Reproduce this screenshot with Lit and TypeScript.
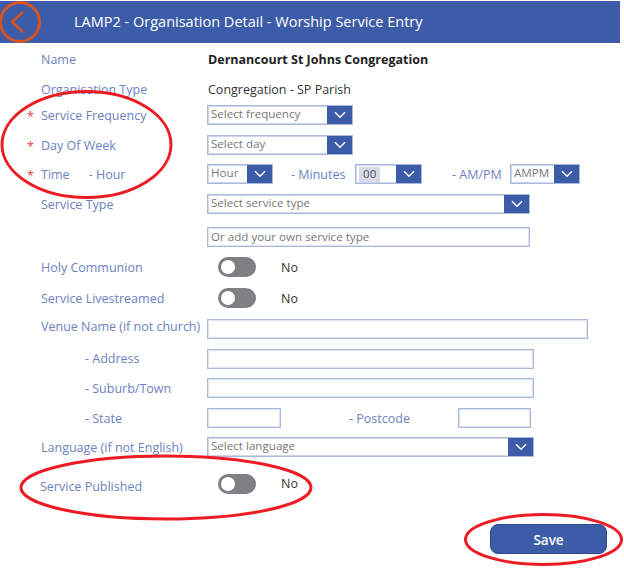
import { LitElement, html, css, svg } from "lit";
import { customElement } from "lit/decorators.js";

const chevron = html`<svg class="chev" width="12" height="8" viewBox="0 0 12 8"><path d="M1 1.2 L6 6.2 L11 1.2" fill="none" stroke="#fff" stroke-width="1.5"/></svg>`;

@customElement("app-root")
export class AppRoot extends LitElement {
  static styles = css`
    :host { display: block; width: 624px; height: 576px; position: relative; background: #fff; overflow: hidden;
      font-family: "Open Sans", "Noto Sans", sans-serif; font-size: 12.5px; color: #333; box-sizing: border-box; padding-top: 1px; }
    .head { height: 42px; width: 620px; background: #3c5ca8; display: flex; align-items: center; color: #fff; font-size: 14.5px; }
    .title { margin-left: 74px; padding-bottom: 1px; white-space: nowrap; }
    .form { display: grid; grid-template-rows: 33px 26px 26px 34px 24px 36px 29px 32px 30px 32px 27px 32px 28px 30px 44px; }
    .row { display: flex; align-items: center; min-width: 0; }
    .lab { width: 206px; box-sizing: border-box; padding-left: 41px; color: #6c81bf; white-space: nowrap; position: relative; flex: none; }
    .lab.sub { padding-left: 85px; }
    .lab.up { top: -3px; }
    .lab.pub { padding-left: 40px; top: 2px; }
    .lab.time { display: flex; gap: 19px; }
    .star { position: absolute; left: 27px; top: 1px; color: #f0414a; }
    .val { color: #333; white-space: nowrap; margin-left: 2px; }
    .val.b { font-weight: 700; color: #222; }
    .sel { box-sizing: border-box; height: 20px; border: 1px solid #a9b9de; box-shadow: inset 0 0 0 1px #cdd6eb; display: flex; align-items: stretch; color: #777; font-size: 11.6px; background: #fff; flex: none; margin-left: 1px; }
    .sel .txt { flex: 1; padding-left: 3px; line-height: 16px; white-space: nowrap; overflow: hidden; }
    .sel .btn { width: 25px; background: #3c5ca8; display: flex; align-items: center; justify-content: center; }
    .chev { display: block; }
    .inp { box-sizing: border-box; height: 20px; border: 1px solid #a9b9de; box-shadow: inset 0 0 0 1px #dde3f1; background: #fff; color: #777; font-size: 11.6px; padding-left: 3px; line-height: 17px; margin-left: 1px; flex: none; }
    .w146 { width: 146px; } .w66 { width: 66px; } .w67 { width: 67px; } .w70 { width: 70px; }
    .w322 { width: 323px; } .w381 { width: 381px; } .w327 { width: 327px; } .w74 { width: 74px; } .w73 { width: 73px; }
    .il { color: #6c81bf; white-space: nowrap; flex: none; }
    .min { margin-left: 18px; width: 64px; }
    .ampm { margin-left: 30px; width: 58px; }
    .sel.m { margin-left: 0; }
    .post { margin-left: 68px; width: 108px; }
    .hl { background: #d5dbea; color: #555; padding-left: 4px; margin: 2px 0 1px 3px; line-height: 14px; flex: none; width: 17px; }
    .gap { flex: 1; }
    .tog { margin-left: 12px; width: 38px; height: 20px; border-radius: 10px; background: #808084; position: relative; flex: none; }
    .tog::after { content: ""; position: absolute; left: 3px; top: 3px; width: 14px; height: 14px; border-radius: 50%; background: #fff; }
    .no { margin-left: 25px; color: #333; }
    .no.up { position: relative; top: -1px; }
    .save { margin: 18px 0 0 490px; width: 117px; height: 30px; box-sizing: border-box; border: 1px solid #2e4a8c; border-radius: 8px; background: #3c5ca8; color: #fff; font-weight: 600; font-size: 13.5px; line-height: 30px; text-align: center; }
    .ov { position: absolute; left: 0; top: 0; pointer-events: none; }
  `;

  sel(text: string, w: string) {
    return html`<div class="sel ${w}"><div class="txt">${text}</div><div class="btn">${chevron}</div></div>`;
  }
  toggle(label: string) {
    return html`<div class="row"><div class="lab">${label}</div><div class="tog"></div><div class="no">No</div></div>`;
  }

  render() {
    return html`
      <div class="head"><div class="title">LAMP2 - Organisation Detail - Worship Service Entry</div></div>
      <div class="form">
        <div class="row"><div class="lab">Name</div><div class="val b">Dernancourt St Johns Congregation</div></div>
        <div class="row"><div class="lab">Organisation Type</div><div class="val">Congregation - SP Parish</div></div>
        <div class="row"><div class="lab"><span class="star">*</span>Service Frequency</div>${this.sel("Select frequency", "w146")}</div>
        <div class="row"><div class="lab"><span class="star">*</span>Day Of Week</div>${this.sel("Select day", "w146")}</div>
        <div class="row"><div class="lab time"><span class="star">*</span><span>Time</span><span>- Hour</span></div>
          ${this.sel("Hour", "w66")}
          <div class="il min">- Minutes</div>
          <div class="sel m w67"><div class="hl">00</div><div class="gap"></div><div class="btn">${chevron}</div></div>
          <div class="il ampm">- AM/PM</div>
          ${this.sel("AMPM", "m w70")}
        </div>
        <div class="row"><div class="lab">Service Type</div>${this.sel("Select service type", "w322")}</div>
        <div class="row"><div class="lab"></div><div class="inp w322">Or add your own service type</div></div>
        ${this.toggle("Holy Communion")}
        ${this.toggle("Service Livestreamed")}
        <div class="row"><div class="lab up">Venue Name (if not church)</div><div class="inp w381"></div></div>
        <div class="row"><div class="lab sub">- Address</div><div class="inp w327"></div></div>
        <div class="row"><div class="lab sub">- Suburb/Town</div><div class="inp w327"></div></div>
        <div class="row"><div class="lab sub">- State</div><div class="inp w74"></div><div class="il post">- Postcode</div><div class="inp w73"></div></div>
        <div class="row"><div class="lab">Language (if not English)</div>${this.sel("Select language", "w327")}</div>
        <div class="row"><div class="lab pub">Service Published</div><div class="tog"></div><div class="no up">No</div></div>
      </div>
      <div class="save">Save</div>
      <svg class="ov" width="624" height="576" viewBox="0 0 624 576">
        ${svg`<circle cx="20" cy="22" r="19.5" fill="none" stroke="#d9531e" stroke-width="3"/>
        <path d="M23 12 L12 22 L23 32" fill="none" stroke="#d9531e" stroke-width="2.5"/>
        <ellipse cx="86.5" cy="144.5" rx="84.5" ry="53" fill="none" stroke="#ed1c24" stroke-width="3"/>
        <ellipse cx="166" cy="487.5" rx="145" ry="31.5" fill="none" stroke="#ed1c24" stroke-width="3"/>
        <ellipse cx="543.5" cy="539.5" rx="78" ry="25" fill="none" stroke="#ed1c24" stroke-width="3"/>`}
      </svg>
    `;
  }
}
